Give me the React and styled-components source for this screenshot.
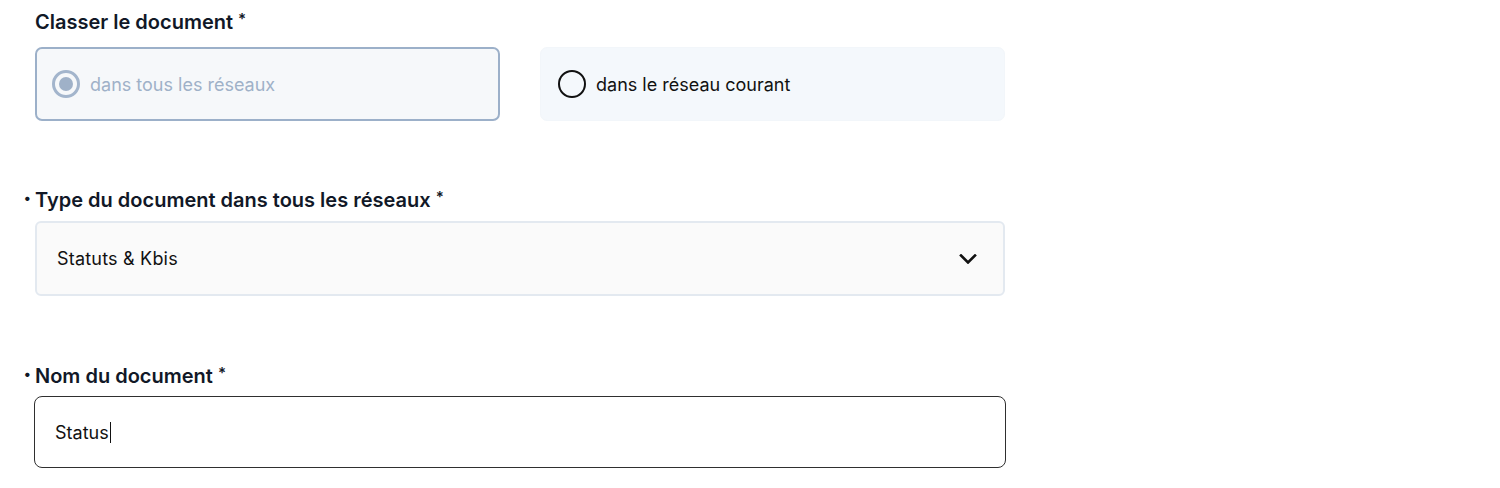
import React, { useState } from "react";
import styled, { createGlobalStyle } from "styled-components";

const GlobalStyle = createGlobalStyle`
  body {
    margin: 0;
    background: #ffffff;
    font-family: Inter, "Noto Sans", sans-serif;
    color: #111827;
  }
`;

const Page = styled.div`
  width: 970px;
  padding: 8px 0 0 35px;
  display: flex;
  flex-direction: column;
`;

const Section = styled.div`
  display: flex;
  flex-direction: column;
  gap: ${(props) => props.gap || 7}px;
  margin-top: ${(props) => props.top || 0}px;
`;

const Label = styled.div`
  position: relative;
  font-size: 20px;
  line-height: 28px;
  font-weight: 600;
  color: #111827;
  display: flex;
  align-items: flex-start;
`;

const Bullet = styled.span`
  position: absolute;
  left: -11px;
  top: -2px;
  font-size: 14px;
  font-weight: 700;
`;

const Star = styled.span`
  font-size: 15px;
  line-height: 15px;
  margin-left: 5px;
  margin-top: 3px;
`;

const RadioRow = styled.div`
  display: grid;
  grid-template-columns: 465px 465px;
  gap: 40px;
`;

const RadioCard = styled.label`
  box-sizing: border-box;
  height: 74px;
  display: flex;
  align-items: center;
  gap: 10px;
  padding-left: ${(props) => (props.checked ? 15 : 17)}px;
  border-radius: 7px;
  border: ${(props) => (props.checked ? "2px solid #9cb0c9" : "1px solid #f2f6fa")};
  background: ${(props) => (props.checked ? "#f6f8fa" : "#f4f8fc")};
  font-size: 18px;
  color: ${(props) => (props.checked ? "#9fb1c8" : "#111111")};
  cursor: pointer;
`;

const Circle = styled.span`
  box-sizing: border-box;
  width: 28px;
  height: 28px;
  border-radius: 50%;
  border: ${(props) => (props.checked ? "3px solid #a3b5cc" : "2px solid #111111")};
  display: grid;
  place-items: center;
  flex-shrink: 0;

  &::after {
    content: "";
    display: ${(props) => (props.checked ? "block" : "none")};
    width: 14px;
    height: 14px;
    border-radius: 50%;
    background: #9fb1c8;
  }
`;

const SelectBox = styled.div`
  box-sizing: border-box;
  height: 75px;
  display: flex;
  align-items: center;
  justify-content: space-between;
  padding: 0 26px 0 20px;
  border: 2px solid #e3e9f0;
  border-radius: 6px;
  background: #fafafa;
  font-size: 18px;
  letter-spacing: 0.2px;
  color: #111111;
`;

const Chevron = styled.svg`
  width: 18px;
  height: 10px;
  margin-top: 1px;
`;

const TextInput = styled.div`
  box-sizing: border-box;
  height: 72px;
  margin-left: -1px;
  width: 972px;
  display: flex;
  align-items: center;
  padding-left: 20px;
  border: 1px solid #2f2f2f;
  border-radius: 8px;
  background: #ffffff;
  font-size: 18px;
  color: #111111;
`;

const Caret = styled.span`
  display: inline-block;
  width: 1px;
  height: 21px;
  background: #111111;
  margin-left: 1px;
`;

const options = [
  { id: "all", text: "dans tous les réseaux" },
  { id: "current", text: "dans le réseau courant" },
];

export default function App() {
  const [scope, setScope] = useState("all");

  return (
    <>
      <GlobalStyle />
      <Page>
        <Section gap={11}>
          <Label>
            Classer le document<Star>*</Star>
          </Label>
          <RadioRow>
            {options.map((o) => (
              <RadioCard
                key={o.id}
                checked={scope === o.id}
                onClick={() => setScope(o.id)}
              >
                <Circle checked={scope === o.id} />
                {o.text}
              </RadioCard>
            ))}
          </RadioRow>
        </Section>

        <Section top={65}>
          <Label>
            <Bullet>•</Bullet>
            Type du document dans tous les réseaux<Star>*</Star>
          </Label>
          <SelectBox>
            Statuts &amp; Kbis
            <Chevron viewBox="0 0 18 10" fill="none">
              <path
                d="M2 1.5l7 7 7-7"
                stroke="#111111"
                strokeWidth="2.6"
                strokeLinecap="square"
              />
            </Chevron>
          </SelectBox>
        </Section>

        <Section top={66} gap={6}>
          <Label>
            <Bullet>•</Bullet>
            Nom du document<Star>*</Star>
          </Label>
          <TextInput>
            Status
            <Caret />
          </TextInput>
        </Section>
      </Page>
    </>
  );
}
